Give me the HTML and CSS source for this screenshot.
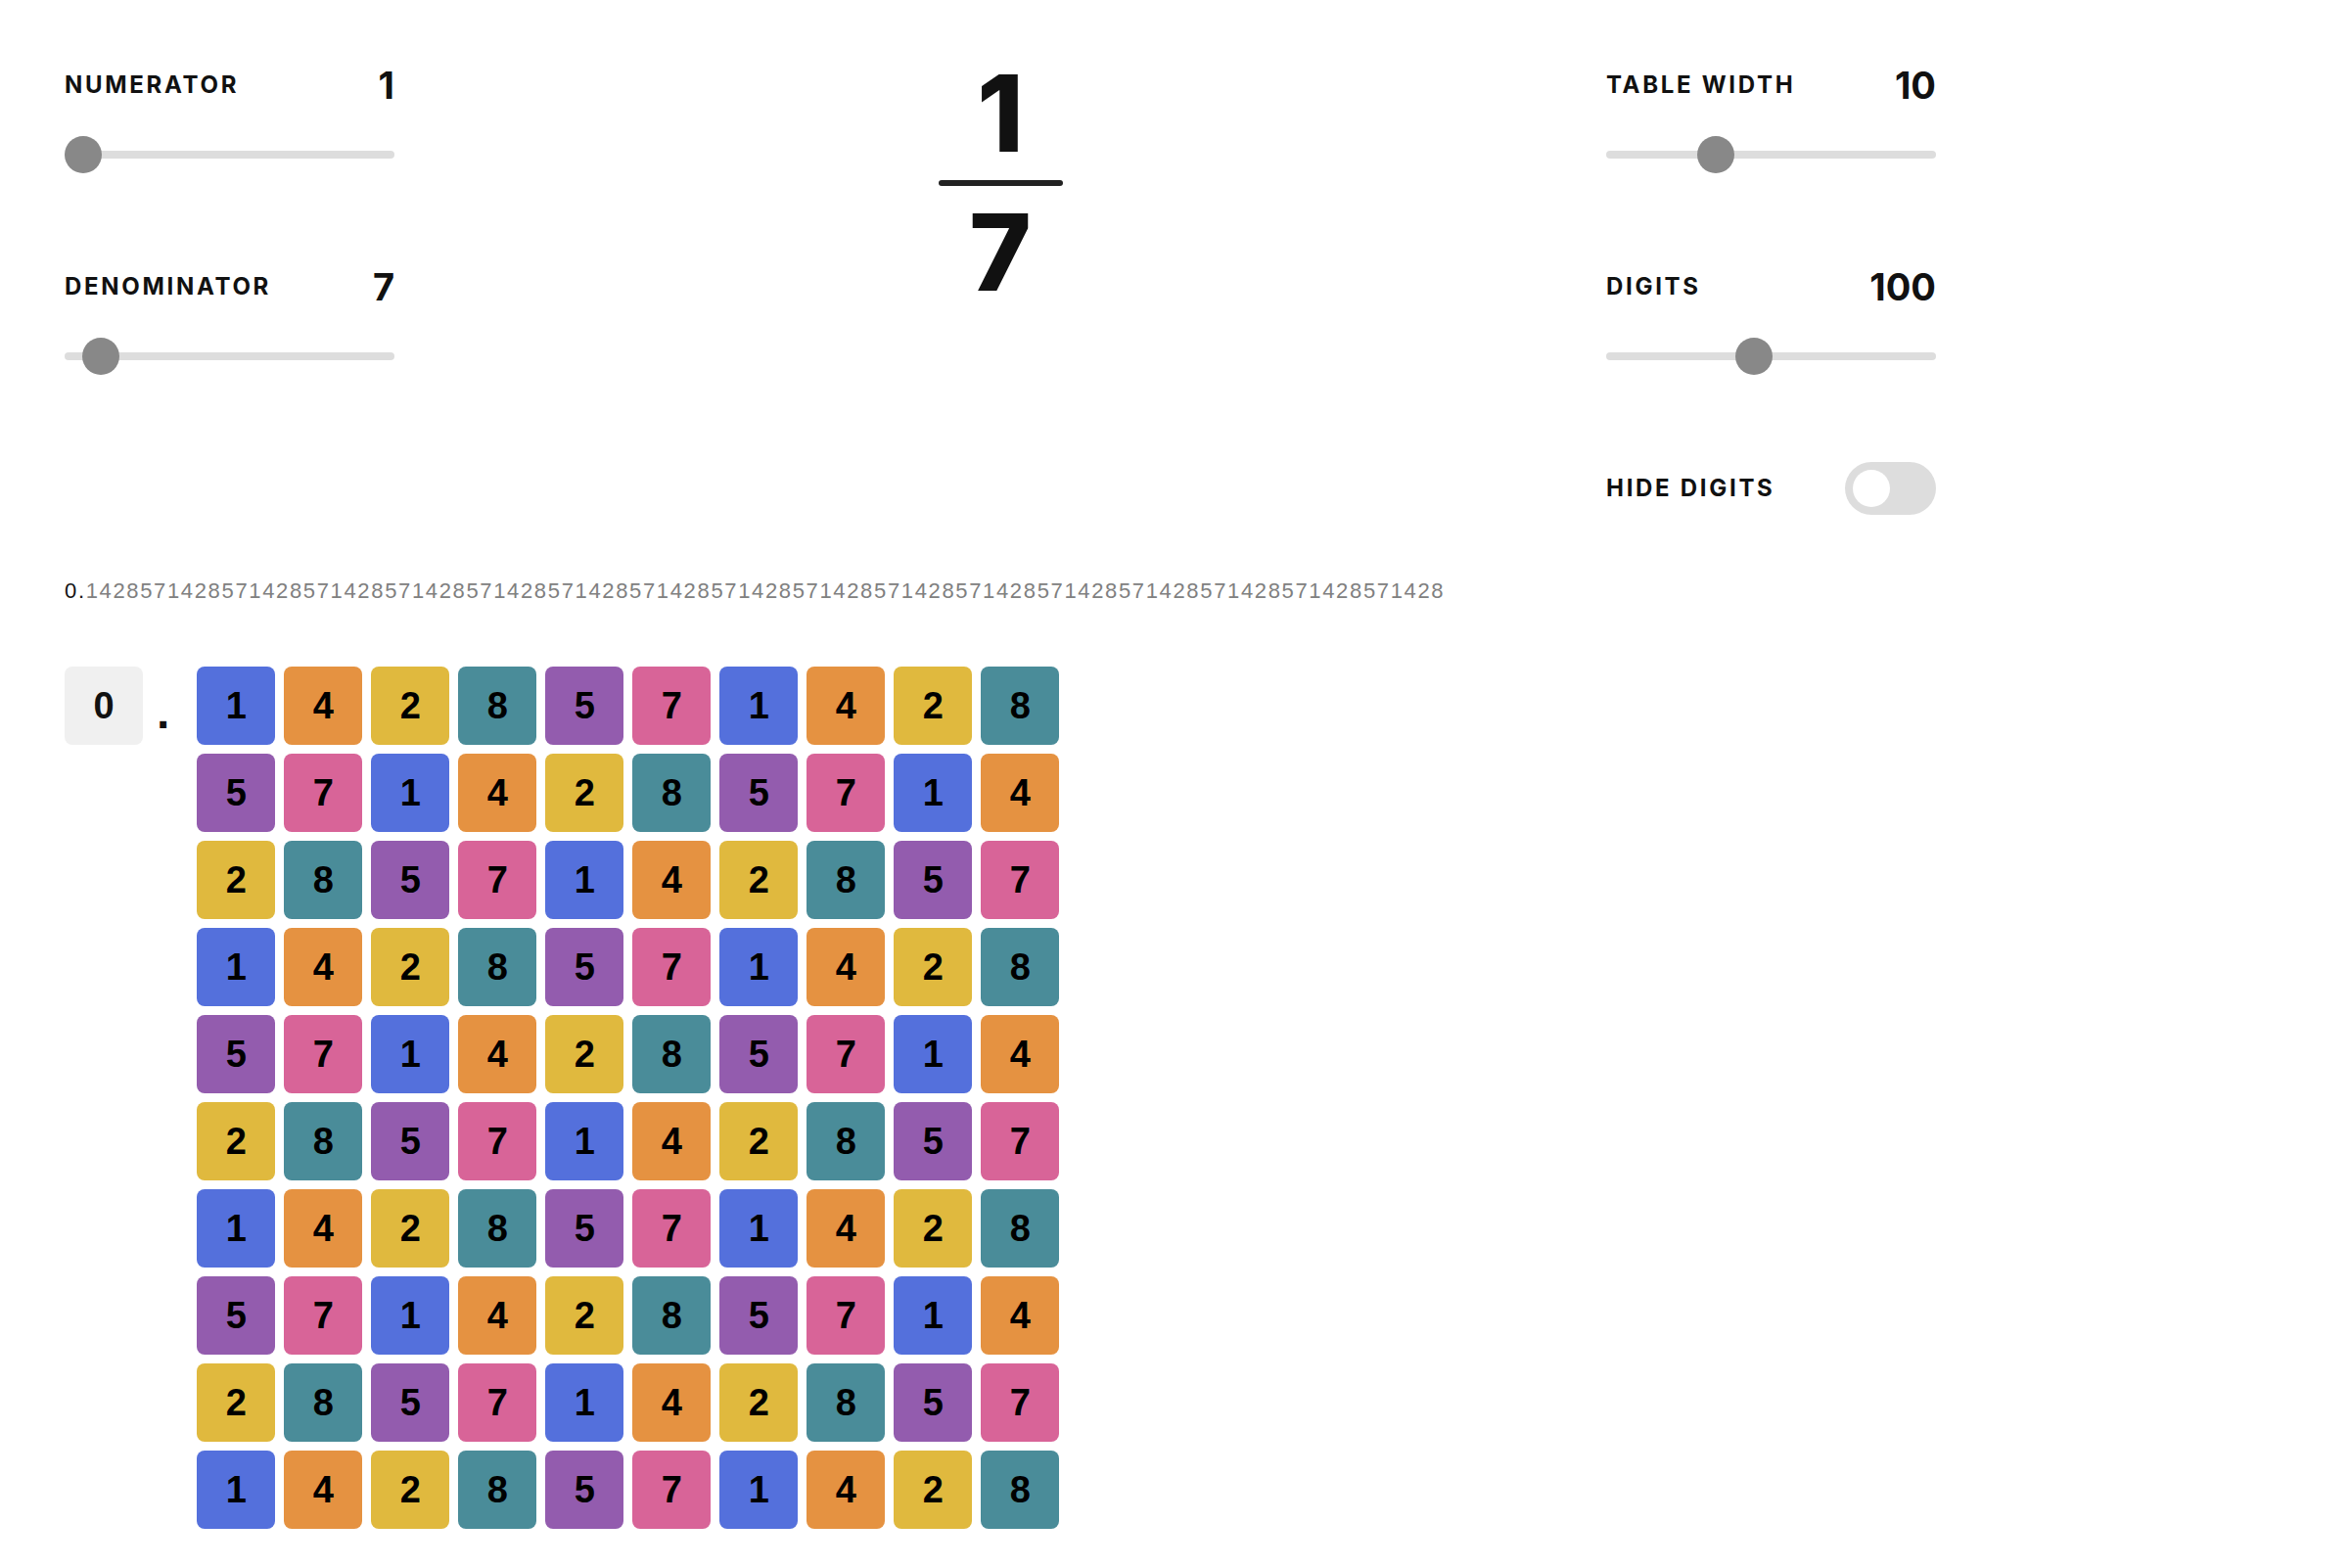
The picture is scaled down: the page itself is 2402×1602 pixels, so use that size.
FILE: index.html
```html
<!DOCTYPE html>
<html lang="en">
<head>
<meta charset="utf-8">
<title>Fraction digits</title>
<link rel="stylesheet" href="styles.css">
</head>
<body>
<div class="page">
  <div class="top">
    <div class="col">
      <div class="control">
        <div class="row"><span class="label">NUMERATOR</span><span class="value">1</span></div>
        <input type="range" class="slider" min="1" max="100" value="1">
      </div>
      <div class="control">
        <div class="row"><span class="label">DENOMINATOR</span><span class="value">7</span></div>
        <input type="range" class="slider" min="1" max="100" value="7">
      </div>
    </div>
    <div class="fraction">
      <div class="fnum">1</div>
      <div class="fbar"></div>
      <div class="fden">7</div>
    </div>
    <div class="col">
      <div class="control">
        <div class="row"><span class="label">TABLE WIDTH</span><span class="value">10</span></div>
        <input type="range" class="slider" min="1" max="30" value="10">
      </div>
      <div class="control">
        <div class="row"><span class="label">DIGITS</span><span class="value">100</span></div>
        <input type="range" class="slider" min="1" max="225" value="100">
      </div>
      <div class="toggle-row">
        <span class="label">HIDE DIGITS</span>
        <span class="toggle"><span class="knob"></span></span>
      </div>
    </div>
  </div>

  <div class="decimal"><span class="int">0.</span><span class="frac">1428571428571428571428571428571428571428571428571428571428571428571428571428571428571428571428571428</span></div>

  <div class="table">
    <div class="whole">0</div>
    <div class="point">.</div>
    <div class="grid">
      <div class="tile t1">1</div><div class="tile t4">4</div><div class="tile t2">2</div><div class="tile t8">8</div><div class="tile t5">5</div><div class="tile t7">7</div><div class="tile t1">1</div><div class="tile t4">4</div><div class="tile t2">2</div><div class="tile t8">8</div>
      <div class="tile t5">5</div><div class="tile t7">7</div><div class="tile t1">1</div><div class="tile t4">4</div><div class="tile t2">2</div><div class="tile t8">8</div><div class="tile t5">5</div><div class="tile t7">7</div><div class="tile t1">1</div><div class="tile t4">4</div>
      <div class="tile t2">2</div><div class="tile t8">8</div><div class="tile t5">5</div><div class="tile t7">7</div><div class="tile t1">1</div><div class="tile t4">4</div><div class="tile t2">2</div><div class="tile t8">8</div><div class="tile t5">5</div><div class="tile t7">7</div>
      <div class="tile t1">1</div><div class="tile t4">4</div><div class="tile t2">2</div><div class="tile t8">8</div><div class="tile t5">5</div><div class="tile t7">7</div><div class="tile t1">1</div><div class="tile t4">4</div><div class="tile t2">2</div><div class="tile t8">8</div>
      <div class="tile t5">5</div><div class="tile t7">7</div><div class="tile t1">1</div><div class="tile t4">4</div><div class="tile t2">2</div><div class="tile t8">8</div><div class="tile t5">5</div><div class="tile t7">7</div><div class="tile t1">1</div><div class="tile t4">4</div>
      <div class="tile t2">2</div><div class="tile t8">8</div><div class="tile t5">5</div><div class="tile t7">7</div><div class="tile t1">1</div><div class="tile t4">4</div><div class="tile t2">2</div><div class="tile t8">8</div><div class="tile t5">5</div><div class="tile t7">7</div>
      <div class="tile t1">1</div><div class="tile t4">4</div><div class="tile t2">2</div><div class="tile t8">8</div><div class="tile t5">5</div><div class="tile t7">7</div><div class="tile t1">1</div><div class="tile t4">4</div><div class="tile t2">2</div><div class="tile t8">8</div>
      <div class="tile t5">5</div><div class="tile t7">7</div><div class="tile t1">1</div><div class="tile t4">4</div><div class="tile t2">2</div><div class="tile t8">8</div><div class="tile t5">5</div><div class="tile t7">7</div><div class="tile t1">1</div><div class="tile t4">4</div>
      <div class="tile t2">2</div><div class="tile t8">8</div><div class="tile t5">5</div><div class="tile t7">7</div><div class="tile t1">1</div><div class="tile t4">4</div><div class="tile t2">2</div><div class="tile t8">8</div><div class="tile t5">5</div><div class="tile t7">7</div>
      <div class="tile t1">1</div><div class="tile t4">4</div><div class="tile t2">2</div><div class="tile t8">8</div><div class="tile t5">5</div><div class="tile t7">7</div><div class="tile t1">1</div><div class="tile t4">4</div><div class="tile t2">2</div><div class="tile t8">8</div>
    </div>
  </div>
</div>
</body>
</html>
```

FILE: styles.css
```css
html, body {
  margin: 0;
  padding: 0;
  background: #ffffff;
}

body {
  font-family: Inter, "Noto Sans", sans-serif;
  color: #111111;
}

.page {
  padding: 65px 0 0 66px;
}

.top {
  display: flex;
  align-items: flex-start;
  width: 1912px;
}

.col {
  width: 337px;
  display: flex;
  flex-direction: column;
}

.control + .control {
  margin-top: 94px;
}

.row {
  display: flex;
  justify-content: space-between;
  align-items: center;
  height: 44px;
  margin-bottom: 30px;
}

.label {
  font-size: 24px;
  font-weight: 700;
  letter-spacing: 2.7px;
  line-height: 30px;
  color: #111111;
}

.value {
  font-size: 38px;
  font-weight: 700;
  line-height: 44px;
  color: #111111;
  letter-spacing: 0;
}

.slider {
  -webkit-appearance: none;
  appearance: none;
  display: block;
  width: 337px;
  height: 38px;
  margin: 0;
  padding: 0;
  background: transparent;
}

.slider::-webkit-slider-runnable-track {
  height: 8px;
  background: #dddddd;
  border-radius: 4px;
}

.slider::-webkit-slider-thumb {
  -webkit-appearance: none;
  appearance: none;
  width: 38px;
  height: 38px;
  border: none;
  border-radius: 50%;
  background: #888888;
  margin-top: -15px;
}

.toggle-row {
  display: flex;
  justify-content: space-between;
  align-items: center;
  height: 54px;
  margin-top: 89px;
}

.toggle {
  width: 93px;
  height: 54px;
  border-radius: 27px;
  background: #dddddd;
  display: flex;
  align-items: center;
  padding-left: 8px;
  box-sizing: border-box;
}

.knob {
  width: 38px;
  height: 38px;
  border-radius: 50%;
  background: #ffffff;
}

.fraction {
  flex: 1;
  display: flex;
  flex-direction: column;
  align-items: center;
  padding-top: 1px;
}

.fnum, .fden {
  font-size: 108px;
  font-weight: 800;
  line-height: 100px;
  color: #111111;
}

.fbar {
  width: 127px;
  height: 6px;
  border-radius: 3px;
  background: #222222;
  margin: 18px 0;
}

.decimal {
  margin-top: 63px;
  font-family: "Liberation Sans", Arial, sans-serif;
  font-size: 22px;
  line-height: 30px;
  letter-spacing: 1.65px;
  white-space: nowrap;
}

.decimal .int {
  color: #111111;
}

.decimal .frac {
  color: #808080;
}

.table {
  margin-top: 62px;
  display: flex;
  align-items: flex-start;
}

.whole {
  width: 80px;
  height: 80px;
  border-radius: 8px;
  background: #f0f0f0;
  display: flex;
  align-items: center;
  justify-content: center;
  font-family: "Liberation Sans", Arial, sans-serif;
  font-weight: 700;
  font-size: 38px;
  color: #111111;
}

.point {
  font-family: "Liberation Sans", Arial, sans-serif;
  font-weight: 700;
  font-size: 48px;
  line-height: 56px;
  margin: 19px 28px 0 14px;
  color: #111111;
}

.grid {
  display: grid;
  grid-template-columns: repeat(10, 80px);
  grid-auto-rows: 80px;
  gap: 9px;
}

.tile {
  border-radius: 8px;
  display: flex;
  align-items: center;
  justify-content: center;
  font-family: "Liberation Sans", Arial, sans-serif;
  font-weight: 700;
  font-size: 38px;
  color: #000000;
}

.t1 { background: #5470dc; }
.t4 { background: #e59241; }
.t2 { background: #e0b93e; }
.t8 { background: #4a8c99; }
.t5 { background: #935cae; }
.t7 { background: #d86498; }
```
